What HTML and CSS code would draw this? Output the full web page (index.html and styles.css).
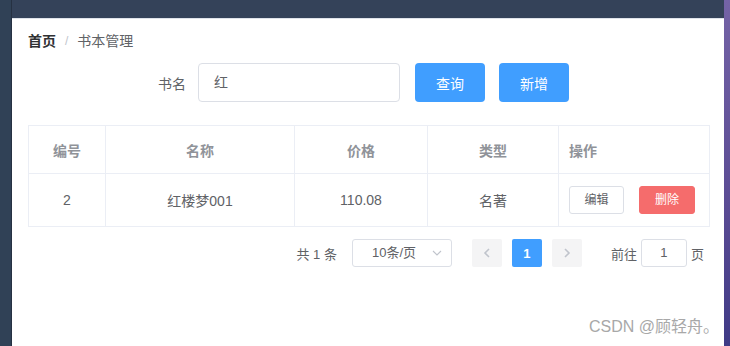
FILE: index.html
```html
<!DOCTYPE html>
<html lang="zh">
<head>
<meta charset="utf-8">
<link rel="stylesheet" href="styles.css">
</head>
<body>
<div class="app">
  <aside class="sidebar"></aside>
  <div class="main">
    <header class="topbar"></header>
    <section class="content">
      <nav class="crumbs">
        <span class="crumb-home">首页</span>
        <span class="crumb-sep">/</span>
        <span class="crumb-cur">书本管理</span>
      </nav>
      <form class="search">
        <label class="search-label">书名</label>
        <div class="search-input">红</div>
        <button type="button" class="btn btn-primary">查询</button>
        <button type="button" class="btn btn-primary">新增</button>
      </form>
      <table class="grid">
        <colgroup>
          <col class="c1"><col class="c2"><col class="c3"><col class="c4"><col class="c5">
        </colgroup>
        <thead>
          <tr><th>编号</th><th>名称</th><th>价格</th><th>类型</th><th class="left">操作</th></tr>
        </thead>
        <tbody>
          <tr>
            <td>2</td><td>红楼梦001</td><td>110.08</td><td>名著</td>
            <td class="left ops"><span class="mini mini-plain">编辑</span><span class="mini mini-danger">删除</span></td>
          </tr>
        </tbody>
      </table>
      <div class="pager">
        <span class="total">共 1 条</span>
        <span class="sizes">10条/页<svg class="caret" width="10" height="6" viewBox="0 0 10 6"><path d="M1 1l4 4 4-4" fill="none" stroke="#c0c4cc" stroke-width="1.1"/></svg></span>
        <span class="pbtn"><svg width="8" height="10" viewBox="0 0 8 10"><path d="M6 1L2 5l4 4" fill="none" stroke="#c0c4cc" stroke-width="1.6"/></svg></span>
        <span class="pnum">1</span>
        <span class="pbtn"><svg width="8" height="10" viewBox="0 0 8 10"><path d="M2 1l4 4-4 4" fill="none" stroke="#c0c4cc" stroke-width="1.6"/></svg></span>
        <span class="jump">前往</span>
        <span class="jump-input">1</span>
        <span class="jump-end">页</span>
      </div>
      <div class="watermark">CSDN @顾轻舟。</div>
    </section>
  </div>
  <div class="edge"></div>
</div>
</body>
</html>
```
FILE: styles.css
```css
* { box-sizing: border-box; }
html, body { margin: 0; padding: 0; }
body {
  width: 730px; height: 346px; overflow: hidden;
  font-family: "Liberation Sans", "Noto Sans CJK SC", sans-serif;
  color: #606266;
}
.app { display: flex; height: 346px; }
.sidebar { width: 12px; background: #304156; border-right: 1px solid #263142; }
.main { width: 712px; display: flex; flex-direction: column; }
.topbar { height: 19px; background: #344259; border-bottom: 1px solid #dfe3ea; }
.edge { width: 6px; background: linear-gradient(#7463a6, #5a4b94 60%, #3f3a86); }
.content { position: relative; flex: 1; background: #fff; padding: 14px 15px 0 16px; }

.crumbs { font-size: 14px; line-height: 16px; height: 16px; display: flex; align-items: center; }
.crumb-home { font-weight: 700; color: #303133; }
.crumb-sep { color: #c0c4cc; margin: 0 9px; font-size: 12px; }
.crumb-cur { color: #606266; }

.search { display: flex; align-items: center; margin: 14px 0 0 130px; height: 39px; }
.search-label { font-size: 14px; color: #606266; margin-right: 12px; }
.search-input {
  width: 202px; height: 39px; border: 1px solid #dcdfe6; border-radius: 4px;
  padding: 0 15px; font-size: 14px; line-height: 37px; color: #606266;
}
.btn {
  width: 70px; height: 39px; border: 0; border-radius: 4px; font: inherit;
  font-size: 14px; color: #fff; margin-left: 15px; padding: 0;
}
.btn + .btn { margin-left: 14px; }
.btn-primary { background: #409eff; }

.grid {
  margin-top: 23px; width: 681px; border-collapse: collapse; table-layout: fixed;
  font-size: 14px; border: 1px solid #ebeef5;
}
.c1 { width: 77px; } .c2 { width: 189px; } .c3 { width: 133px; } .c4 { width: 131px; } .c5 { width: 151px; }
.grid th, .grid td { border: 1px solid #ebeef5; text-align: center; padding: 0 10px; }
.grid th { height: 48px; color: #909399; font-weight: 700; }
.grid td { height: 53px; color: #606266; }
.grid .left { text-align: left; }
.ops { font-size: 0; }
.mini {
  display: inline-block; vertical-align: middle; height: 28px; line-height: 26px; font-size: 12px;
  border-radius: 3px; border: 1px solid #dcdfe6; text-align: center;
}
.mini-plain { width: 55px; color: #606266; background: #fff; }
.mini-danger { width: 56px; margin-left: 15px; color: #fff; background: #f56c6c; border-color: #f56c6c; }

.pager {
  margin-top: 12px; display: flex; justify-content: flex-end; align-items: center;
  height: 28px; font-size: 13px; padding-right: 5px; color: #606266;
}
.total { margin-right: 15px; }
.sizes {
  position: relative; width: 100px; height: 28px; border: 1px solid #dcdfe6; border-radius: 3px;
  line-height: 26px; padding-left: 19px; color: #606266; margin-right: 20px;
}
.caret { position: absolute; right: 9px; top: 10px; }
.pbtn, .pnum {
  width: 30px; height: 28px; border-radius: 2px; background: #f4f4f5;
  display: flex; align-items: center; justify-content: center;
}
.pnum { background: #409eff; color: #fff; font-weight: 700; margin: 0 10px; }
.jump { margin-left: 29px; margin-right: 4px; }
.jump-input {
  width: 46px; height: 28px; border: 1px solid #dcdfe6; border-radius: 3px;
  text-align: center; line-height: 26px;
}
.jump-end { margin-left: 4px; }

.watermark {
  position: absolute; right: 5px; bottom: 9px; font-size: 16px; color: #a8a8a8;
  text-shadow: 0 0 1px #fff;
}
```
